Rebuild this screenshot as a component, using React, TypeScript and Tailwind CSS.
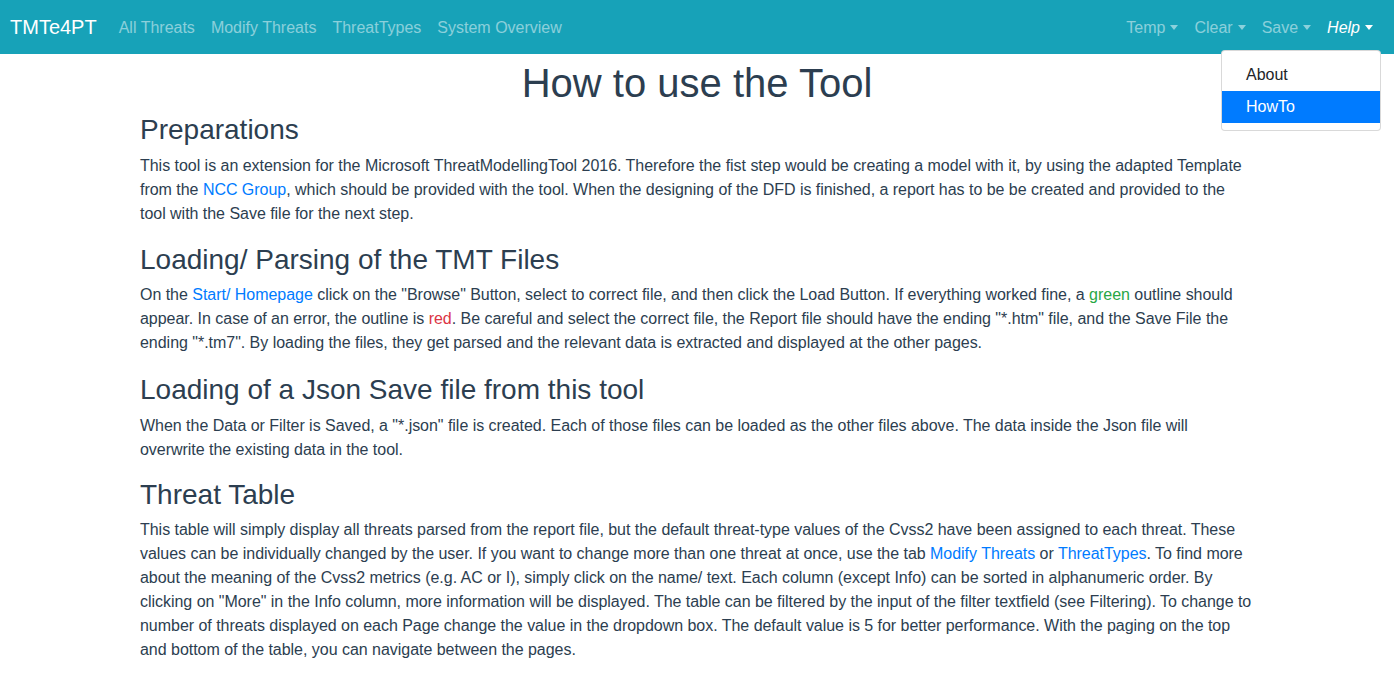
import React from 'react';

const leftLinks = ['All Threats', 'Modify Threats', 'ThreatTypes', 'System Overview'];
const rightMenus = ['Temp', 'Clear', 'Save'];

function Caret() {
  return (
    <span className="inline-block ml-[5px] align-[3px] w-0 h-0 border-t-[5px] border-t-current border-x-[4px] border-x-transparent" />
  );
}

function Link({ children }: { children: React.ReactNode }) {
  return <a className="text-[#007bff]">{children}</a>;
}

export default function App() {
  return (
    <div className="min-h-[680px] bg-white font-['Liberation_Sans',Arial,sans-serif] text-[#2c3e50] antialiased">
      <nav className="h-[54px] bg-[#17a2b8] flex items-center justify-between pl-[10px] pr-[13px]">
        <div className="flex items-center">
          <span className="text-[20px] leading-[30px] text-white mr-[14px]">TMTe4PT</span>
          <ul className="flex">
            {leftLinks.map((l) => (
              <li key={l} className="px-[8px] pt-[9px] pb-[7px] text-[16px] leading-[24px] text-white/50">
                {l}
              </li>
            ))}
          </ul>
        </div>
        <ul className="flex">
          {rightMenus.map((m) => (
            <li key={m} className="px-[8px] pt-[9px] pb-[7px] text-[16px] leading-[24px] text-white/50">
              {m}
              <Caret />
            </li>
          ))}
          <li className="relative px-[8px] pt-[9px] pb-[7px] text-[16px] leading-[24px] text-white italic">
            Help
            <Caret />
            <div className="absolute right-0 top-[43px] w-[160px] bg-white border border-black/15 rounded-[4px] pt-[8px] pb-[7px] not-italic z-10">
              <div className="px-[24px] py-[4px] text-[#212529]">About</div>
              <div className="px-[24px] py-[4px] bg-[#007bff] text-white">HowTo</div>
            </div>
          </li>
        </ul>
      </nav>

      <main className="w-[1144px] mx-auto px-[15px] tracking-[-0.03px]">
        <h1 className="text-center text-[40px] leading-[48px] mt-[5px] mb-[6px] tracking-normal">How to use the Tool</h1>

        <h3 className="text-[28px] leading-[33.6px] mb-[7px] tracking-normal">Preparations</h3>
        <p className="text-[16px] leading-[24px] mb-[17px]">
          This tool is an extension for the Microsoft ThreatModellingTool 2016. Therefore the fist step would be
          creating a model with it, by using the adapted Template from the <Link>NCC Group</Link>, which should be
          provided with the tool. When the designing of the DFD is finished, a report has to be be created and
          provided to the tool with the Save file for the next step.
        </p>

        <h3 className="text-[28px] leading-[33.6px] mb-[7px] tracking-normal">Loading/ Parsing of the TMT Files</h3>
        <p className="text-[16px] leading-[24px] mb-[18px]">
          On the <Link>Start/ Homepage</Link> click on the "Browse" Button, select to correct file, and then click the
          Load Button. If everything worked fine, a <span className="text-[#28a745]">green</span> outline should
          appear. In case of an error, the outline is <span className="text-[#dc3545]">red</span>. Be careful and
          select the correct file, the Report file should have the ending "*.htm" file, and the Save File the ending
          "*.tm7". By loading the files, they get parsed and the relevant data is extracted and displayed at the other
          pages.
        </p>

        <h3 className="text-[28px] leading-[33.6px] mb-[7px] tracking-normal">Loading of a Json Save file from this tool</h3>
        <p className="text-[16px] leading-[24px] mb-[16px]">
          When the Data or Filter is Saved, a "*.json" file is created. Each of those files can be loaded as the other
          files above. The data inside the Json file will overwrite the existing data in the tool.
        </p>

        <h3 className="text-[28px] leading-[33.6px] mb-[7px] tracking-normal">Threat Table</h3>
        <p className="text-[16px] leading-[24px] mb-[16px]">
          This table will simply display all threats parsed from the report file, but the default threat-type values
          of the Cvss2 have been assigned to each threat. These values can be individually changed by the user. If you
          want to change more than one threat at once, use the tab <Link>Modify Threats</Link> or{' '}
          <Link>ThreatTypes</Link>. To find more about the meaning of the Cvss2 metrics (e.g. AC or I), simply click on
          the name/ text. Each column (except Info) can be sorted in alphanumeric order. By clicking on "More" in the
          Info column, more information will be displayed. The table can be filtered by the input of the filter
          textfield (see Filtering). To change to number of threats displayed on each Page change the value in the
          dropdown box. The default value is 5 for better performance. With the paging on the top and bottom of the
          table, you can navigate between the pages.
        </p>
      </main>
    </div>
  );
}
